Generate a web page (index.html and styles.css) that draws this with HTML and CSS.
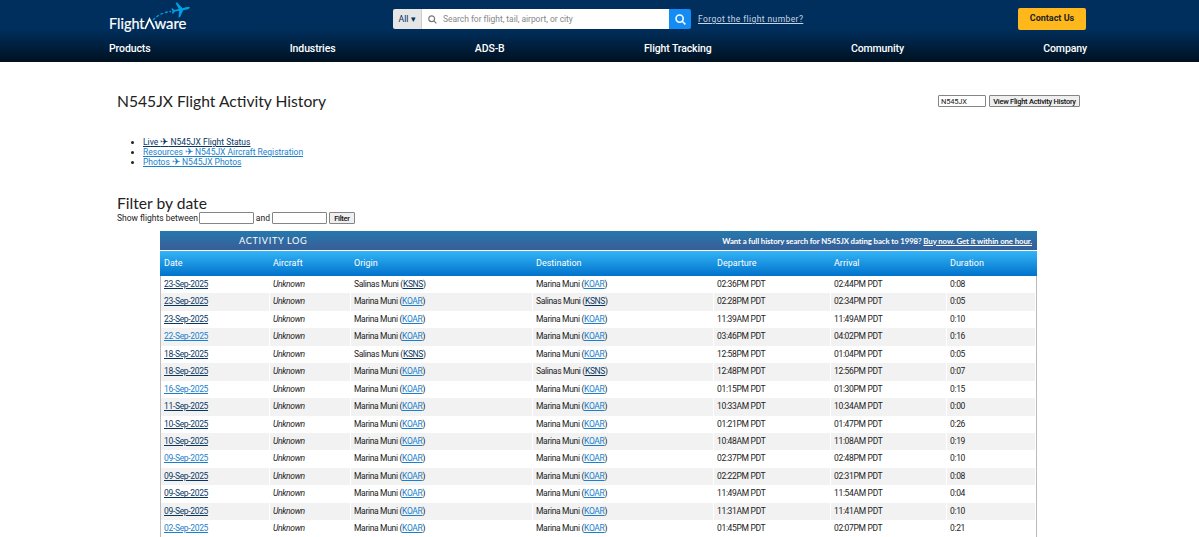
FILE: index.html
```
<!DOCTYPE html>
<html lang="en">
<head>
  <meta charset="UTF-8" />
  <meta name="viewport" content="width=device-width, initial-scale=1.0" />
  <title>N545JX Flight Activity History - FlightAware</title>
  <link rel="stylesheet" href="styles.css">
</head>
<body>

  <header class="header">
    <div class="header-top">
      <a class="logo" href="#">
        <svg width="84" height="34" viewBox="0 0 84 34">
          <text class="logo-text" x="0" y="29" textLength="35.5" lengthAdjust="spacingAndGlyphs">Flight</text>
          <path d="M36 29 L40.5 19 L45.5 29" fill="none" stroke="#fff" stroke-width="1.7" />
          <text class="logo-text" x="45.5" y="29" textLength="32" lengthAdjust="spacingAndGlyphs">ware</text>
          <path d="M44 20 C48 16 53 12.5 62 11.5" fill="none" stroke="#009fe3" stroke-width="1.3" stroke-dasharray="3 1.7" />
          <path d="M81 7.4 C79.5 6.6 77 7.3 73.5 8.2 L68.2 2.5 L66.5 2.8 L69.7 9 L65.5 10 L63.4 8.2 L62.4 8.5 L63.5 11 L63 13.8 L64 13.7 L66 11.4 L70.2 10.7 L69.5 17.6 L71 17.3 L74.2 10.2 C78 9.5 80.5 8.8 81 7.4 Z" fill="#009fe3" />
        </svg>
      </a>
      <form class="search" onsubmit="return false">
        <button class="search-type" type="button">All ▾</button>
        <div class="search-box">
          <svg width="9" height="9" viewBox="0 0 9 9" fill="none" stroke="#777" stroke-width="1.2"><circle cx="3.7" cy="3.7" r="2.9" /><path d="M5.8 5.8 L8.4 8.4" /></svg>
          <input type="text" placeholder="Search for flight, tail, airport, or city">
        </div>
        <button class="search-btn">
          <svg width="11" height="11" viewBox="0 0 11 11" fill="none" stroke="#fff" stroke-width="1.6"><circle cx="4.6" cy="4.6" r="3.6" /><path d="M7.2 7.2 L10.4 10.4" /></svg>
        </button>
      </form>
      <a class="forgot" href="#">Forgot the flight number?</a>
      <a class="contact" href="#">Contact Us</a>
    </div>
    <nav class="nav">
      <a href="#">Products</a>
      <a href="#">Industries</a>
      <a href="#">ADS-B</a>
      <a href="#">Flight Tracking</a>
      <a href="#">Community</a>
      <a href="#">Company</a>
    </nav>
  </header>

  <main class="content">
    <div class="title-row">
      <h1>N545JX Flight Activity History</h1>
      <form class="ident-form" onsubmit="return false">
        <input type="text" value="N545JX">
        <button>View Flight Activity History</button>
      </form>
    </div>

    <ul class="links">
      <li><a class="visited" href="#">Live <span class="plane">✈</span> N545JX Flight Status</a></li>
      <li><a href="#">Resources <span class="plane">✈</span> N545JX Aircraft Registration</a></li>
      <li><a href="#">Photos <span class="plane">✈</span> N545JX Photos</a></li>
    </ul>

    <h2>Filter by date</h2>
    <form class="filter" onsubmit="return false">
      <span class="filter-label">Show flights between</span>
      <input type="text">
      <span class="filter-and">and</span>
      <input type="text">
      <button>Filter</button>
    </form>

    <section class="log">
      <div class="log-title">
        <h3>ACTIVITY LOG</h3>
        <p>Want a full history search for N545JX dating back to 1998? <a href="#">Buy now. Get it within one hour.</a></p>
      </div>
      <div class="log-row log-head">
        <span>Date</span>
        <span>Aircraft</span>
        <span>Origin</span>
        <span>Destination</span>
        <span>Departure</span>
        <span>Arrival</span>
        <span>Duration</span>
      </div>
      <div id="flights"></div>
    </section>
  </main>

  <script>
    // date, origin, destination, departure, arrival, duration, visited
    const flights = [
      ['23-Sep-2025', 'KSNS', 'KOAR', '02:36PM', '02:44PM', '0:08', true],
      ['23-Sep-2025', 'KOAR', 'KSNS', '02:28PM', '02:34PM', '0:05', true],
      ['23-Sep-2025', 'KOAR', 'KOAR', '11:39AM', '11:49AM', '0:10', true],
      ['22-Sep-2025', 'KOAR', 'KOAR', '03:46PM', '04:02PM', '0:16', false],
      ['18-Sep-2025', 'KSNS', 'KOAR', '12:58PM', '01:04PM', '0:05', true],
      ['18-Sep-2025', 'KOAR', 'KSNS', '12:48PM', '12:56PM', '0:07', true],
      ['16-Sep-2025', 'KOAR', 'KOAR', '01:15PM', '01:30PM', '0:15', false],
      ['11-Sep-2025', 'KOAR', 'KOAR', '10:33AM', '10:34AM', '0:00', true],
      ['10-Sep-2025', 'KOAR', 'KOAR', '01:21PM', '01:47PM', '0:26', true],
      ['10-Sep-2025', 'KOAR', 'KOAR', '10:48AM', '11:08AM', '0:19', true],
      ['09-Sep-2025', 'KOAR', 'KOAR', '02:37PM', '02:48PM', '0:10', false],
      ['09-Sep-2025', 'KOAR', 'KOAR', '02:22PM', '02:31PM', '0:08', true],
      ['09-Sep-2025', 'KOAR', 'KOAR', '11:49AM', '11:54AM', '0:04', true],
      ['09-Sep-2025', 'KOAR', 'KOAR', '11:31AM', '11:41AM', '0:10', true],
      ['02-Sep-2025', 'KOAR', 'KOAR', '01:45PM', '02:07PM', '0:21', false]
    ];

    const airports = {
      KSNS: '<span>Salinas Muni (<a class="visited" href="#">KSNS</a>)</span>',
      KOAR: '<span>Marina Muni (<a href="#">KOAR</a>)</span>'
    };

    document.getElementById('flights').innerHTML = flights.map(f => `
      <div class="log-row">
        <span><a class="${f[6] ? 'visited' : ''}" href="#">${f[0]}</a></span>
        <span><i>Unknown</i></span>
        ${airports[f[1]]}
        ${airports[f[2]]}
        <span>${f[3]} PDT</span>
        <span>${f[4]} PDT</span>
        <span>${f[5]}</span>
      </div>`).join('');
  </script>

</body>
</html>
```
FILE: styles.css
```
* { margin: 0; padding: 0; box-sizing: border-box; }

body {
  font-family: Roboto, sans-serif;
  font-size: 8.5px;
  color: #222;
  background-color: #fff;
  overflow: hidden;
}

a { color: #1a7fcc; }
a.visited { color: #083763; }

.header {
  height: 62px;
  padding: 0 112px 0 109px;
  background: linear-gradient(#002f5d 0, #002f5d 29px, #001222 61px);
}

.header-top {
  display: flex;
  height: 38px;
}

.logo { width: 284px; }
.logo svg { display: block; }

.logo-text {
  font-family: Lato, sans-serif;
  font-size: 15px;
  fill: #fff;
  stroke: #fff;
  stroke-width: 0.2px;
}

.search {
  display: flex;
  width: 298px;
  height: 20px;
  margin-top: 9px;
  border-radius: 2px;
  overflow: hidden;
}

.search-type {
  width: 29px;
  border: none;
  border-right: 1px solid #ccc;
  background-color: #e6e6e6;
  color: #002f5d;
  font: 8.7px Roboto, sans-serif;
}

.search-box {
  display: flex;
  flex: 1;
  align-items: center;
  gap: 6px;
  padding-left: 6px;
  background-color: #fff;
}

.search-box input {
  flex: 1;
  border: none;
  font: 8.5px Roboto, sans-serif;
  letter-spacing: -0.04px;
}

.search-box input::placeholder { color: #888; }

.search-btn {
  display: flex;
  align-items: center;
  justify-content: center;
  width: 22px;
  border: none;
  background-color: #148cf5;
}

.forgot {
  margin: 14px 0 0 7px;
  color: #c5d5e4;
  font-size: 8.5px;
  letter-spacing: 0.4px;
}

.contact {
  width: 68px;
  height: 22px;
  margin: 8px 1px 0 auto;
  border-radius: 2px;
  background-color: #ffb81c;
  color: #222;
  font-size: 9px;
  font-weight: 700;
  line-height: 21px;
  text-align: center;
  text-decoration: none;
}

.nav {
  display: flex;
  justify-content: space-between;
  line-height: 21px;
}

.nav a {
  color: #fff;
  font-size: 10.5px;
  font-weight: 500;
  letter-spacing: -0.12px;
  text-decoration: none;
}

.content { padding: 30px 119px 0 117px; }

.title-row {
  display: flex;
  justify-content: space-between;
}

h1, h2 {
  font-family: Lato, sans-serif;
  font-size: 15.65px;
  font-weight: 400;
  line-height: 19px;
}

input[type="text"] { color: #222; }

.ident-form,
.filter {
  display: flex;
  align-items: center;
}

.ident-form {
  height: 12px;
  margin-top: 3px;
  gap: 3px;
}

.ident-form input,
.filter input {
  width: 48px;
  height: 12px;
  padding: 0 2px;
  border: 1px solid #858585;
  border-radius: 1px;
  font: 7.5px Roboto, sans-serif;
  letter-spacing: -0.2px;
}

.ident-form button,
.filter button {
  height: 12px;
  border: 1px solid #858585;
  border-radius: 1px;
  background-color: #efefef;
  color: #111;
  font: 500 7.5px Roboto, sans-serif;
  letter-spacing: -0.27px;
}

.ident-form button { width: 91px; }

.links {
  margin: 26px 0 27px 26px;
  line-height: 10px;
}

.plane { font-size: 9.5px; line-height: 1; }

/* the inputs sit tight under the heading */
.filter {
  height: 12px;
  margin-top: -1px;
}

.filter input { width: 55px; }
.filter button { width: 26px; }
.filter-label { margin-right: 1px; }
.filter-and { margin: 0 2px; }
.filter input + button { margin-left: 2px; }

.log {
  width: 877px;
  margin: 7px 0 0 43px;
}

.log-title {
  display: flex;
  align-items: center;
  justify-content: space-between;
  height: 19px;
  padding: 0 5px 0 79px;
  background: linear-gradient(#2579ae, #3a5d97);
  color: #fff;
  font-family: Lato, sans-serif;
}

.log-title h3 {
  font-size: 9.2px;
  font-weight: 400;
  letter-spacing: 0.65px;
}

.log-title p {
  font-size: 7.8px;
  font-weight: 700;
  letter-spacing: -0.09px;
}

.log-title a { color: #fff; }

#flights {
  border: 1px solid #bbb;
  border-width: 0 1px;
}

.log-row {
  display: grid;
  grid-template-columns: 109px 81px 182px 181px 117px 116px 1fr;
  height: 17.45px;
  font-size: 8.5px;
  letter-spacing: -0.33px;
  line-height: 17.45px;
  white-space: nowrap;
}

.log-row span {
  padding-left: 3px;
  border-right: 1px solid #fff;
}

.log-row:nth-child(even) { background-color: #f2f2f2; }

.log .log-head {
  height: 25px;
  margin-top: 1px;
  padding-left: 1px;
  background: linear-gradient(#34b5f7, #0072cb);
  color: #fff;
  font-size: 9px;
  letter-spacing: 0;
  line-height: 25px;
}

.log-head span { border: none; }
```
